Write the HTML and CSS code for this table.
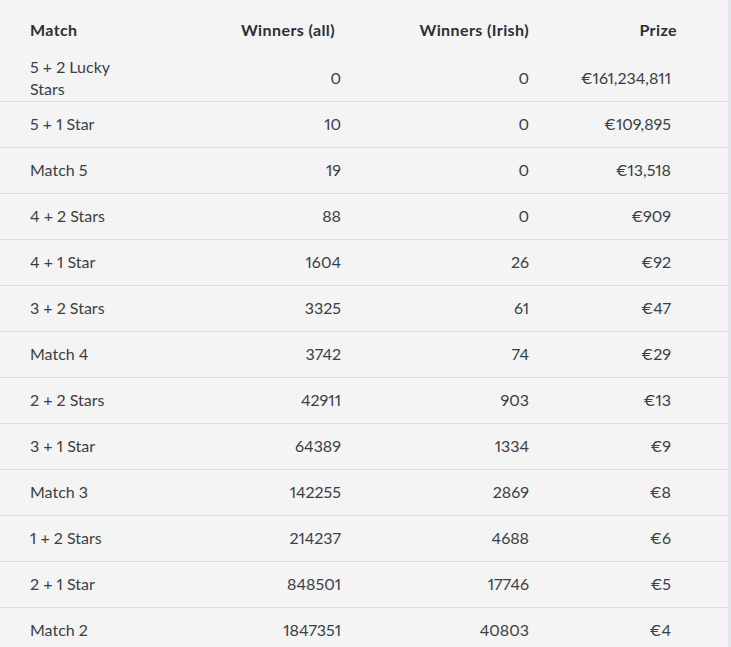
FILE: index.html
```html
<!DOCTYPE html>
<html>
<head>
<meta charset="utf-8">
<link rel="stylesheet" href="styles.css">
</head>
<body>
<div class="page">
<table class="prizes">
  <colgroup>
    <col class="c-match"><col class="c-all"><col class="c-irish"><col class="c-prize">
  </colgroup>
  <thead>
    <tr><th class="match">Match</th><th class="all">Winners (all)</th><th class="irish">Winners (Irish)</th><th class="prize">Prize</th></tr>
  </thead>
  <tbody>
    <tr class="two"><td class="match">5 + 2 Lucky Stars</td><td class="all">0</td><td class="irish">0</td><td class="prize">€161,234,811</td></tr>
    <tr><td class="match">5 + 1 Star</td><td class="all">10</td><td class="irish">0</td><td class="prize">€109,895</td></tr>
    <tr><td class="match">Match 5</td><td class="all">19</td><td class="irish">0</td><td class="prize">€13,518</td></tr>
    <tr><td class="match">4 + 2 Stars</td><td class="all">88</td><td class="irish">0</td><td class="prize">€909</td></tr>
    <tr><td class="match">4 + 1 Star</td><td class="all">1604</td><td class="irish">26</td><td class="prize">€92</td></tr>
    <tr><td class="match">3 + 2 Stars</td><td class="all">3325</td><td class="irish">61</td><td class="prize">€47</td></tr>
    <tr><td class="match">Match 4</td><td class="all">3742</td><td class="irish">74</td><td class="prize">€29</td></tr>
    <tr><td class="match">2 + 2 Stars</td><td class="all">42911</td><td class="irish">903</td><td class="prize">€13</td></tr>
    <tr><td class="match">3 + 1 Star</td><td class="all">64389</td><td class="irish">1334</td><td class="prize">€9</td></tr>
    <tr><td class="match">Match 3</td><td class="all">142255</td><td class="irish">2869</td><td class="prize">€8</td></tr>
    <tr><td class="match">1 + 2 Stars</td><td class="all">214237</td><td class="irish">4688</td><td class="prize">€6</td></tr>
    <tr><td class="match">2 + 1 Star</td><td class="all">848501</td><td class="irish">17746</td><td class="prize">€5</td></tr>
    <tr><td class="match">Match 2</td><td class="all">1847351</td><td class="irish">40803</td><td class="prize">€4</td></tr>
  </tbody>
</table>
</div>
</body>
</html>
```
FILE: styles.css
```css
html, body {
  margin: 0;
  padding: 0;
  background: #f4f4f4;
  overflow: hidden;
}
.page {
  width: 728px;
  height: 647px;
  border-right: 3px solid #e3e7eb;
  overflow: hidden;
}
.prizes {
  width: 728px;
  border-collapse: collapse;
  table-layout: fixed;
  font-family: Lato, "Open Sans", sans-serif;
  font-size: 16px;
  font-variant-numeric: proportional-nums;
  color: #3a3f44;
}
.c-match { width: 145px; }
.c-all { width: 205px; }
.c-irish { width: 190px; }
.c-prize { width: 188px; }
.prizes th {
  font-weight: 700;
  color: #2b3035;
  letter-spacing: 0.4px;
  line-height: 22px;
  padding: 19px 0 15px 0;
  text-align: right;
}
.prizes td {
  line-height: 22px;
  height: 43px;
  padding: 0 0 2px 0;
  text-align: right;
  vertical-align: middle;
  border-bottom: 1px solid #dcdcdc;
}
.prizes .two td.match {
  height: 45px;
  padding-bottom: 0;
  vertical-align: top;
}
.prizes .match { text-align: left; padding-left: 30px; }
.prizes th.all { padding-right: 15px; }
.prizes td.all { padding-right: 9px; }
.prizes .irish { padding-right: 11px; }
.prizes th.prize { padding-right: 51px; }
.prizes td.prize { padding-right: 57px; }
```
